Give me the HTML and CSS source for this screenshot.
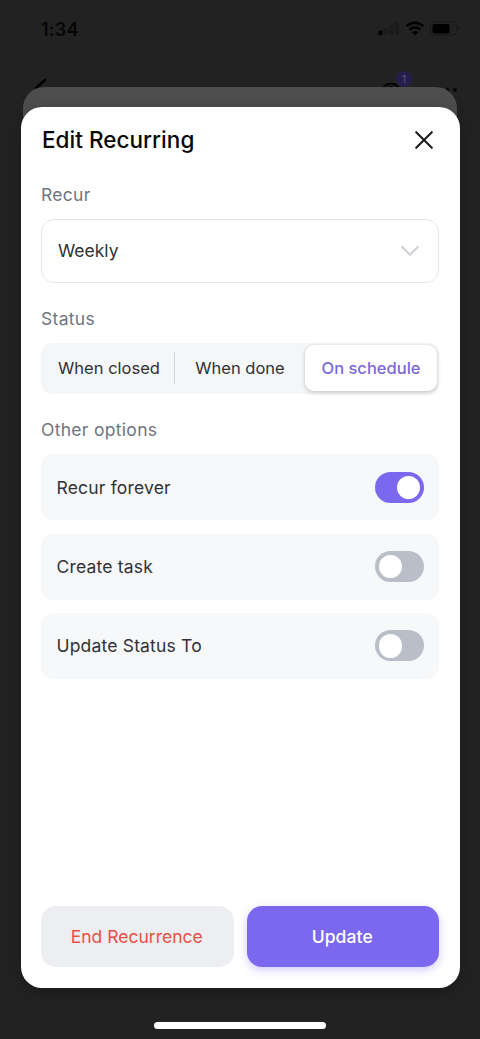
FILE: index.html
```html
<!DOCTYPE html>
<html lang="en">
<head>
<meta charset="utf-8">
<title>Edit Recurring</title>
<link rel="stylesheet" href="styles.css">
</head>
<body>
<div class="screen">
  <header class="status-bar">
    <span class="clock">1:34</span>
    <svg class="status-icons" width="82" height="18" viewBox="0 0 82 18">
      <rect x="0.5" y="10.5" width="4" height="4.5" rx="1" fill="#000"/>
      <g fill="#1b1b1b"><rect x="6" y="8" width="4" height="7" rx="1"/><rect x="11.500" y="5" width="4" height="10" rx="1"/><rect x="17" y="2" width="4" height="13" rx="1"/></g>
      <g fill="none" stroke="#000" stroke-width="2.400"><path d="M28.600 6.200Q37 -.8 45.400 6.200"/><path d="M31.600 9.600Q37 5.400 42.400 9.600"/></g>
      <path d="M33.800 12.200Q37 9.600 40.200 12.200L37 15.200Z" fill="#000"/>
      <rect x="52.500" y="2" width="26" height="13" rx="3.500" fill="none" stroke="#171717" stroke-width="1"/>
      <rect x="54.500" y="4" width="17" height="9.500" rx="2" fill="#000"/>
      <path d="M80 6v5q2-1 2-2.500T80 6Z" fill="#151515"/>
    </svg>
  </header>
  <div class="nav-bar">
    <svg class="back" width="14" height="16" viewBox="0 0 14 16"><path d="M11 2 2 10l8 8" fill="none" stroke="#000" stroke-width="2.400" stroke-linecap="round"/></svg>
    <div class="watchers">
      <svg width="22" height="14" viewBox="0 0 22 14"><path d="M1 7Q11-6 21 7M6 8a5 4 0 0 1 10 0" fill="none" stroke="#000" stroke-width="1.800"/></svg>
      <span class="badge">1</span>
    </div>
    <svg class="more" width="20" height="4" viewBox="0 0 20 4"><circle cx="2" cy="2" r="1.800"/><circle cx="9.500" cy="2" r="1.800"/><circle cx="17" cy="2" r="1.800"/></svg>
  </div>
  <div class="sheet"></div>
  <main class="modal">
    <div class="modal-head">
      <h1 class="title">Edit Recurring</h1>
      <svg class="close" width="20" height="20" viewBox="0 0 20 20"><path d="M2.200 2.200 17.800 17.800M17.800 2.200 2.200 17.800" fill="none" stroke="#1d1d1d" stroke-width="2.100" stroke-linecap="round"/></svg>
    </div>
    <h2 class="label label-recur">Recur</h2>
    <div class="select"><span class="weekly">Weekly</span>
      <svg width="20" height="12" viewBox="0 0 20 12"><path d="M2.200 2 10 9.800 17.800 2" fill="none" stroke="#cfd2d6" stroke-width="2.200" stroke-linecap="round" stroke-linejoin="round"/></svg>
    </div>
    <h2 class="label label-status">Status</h2>
    <div class="segments">
      <span class="segment divided">When closed</span>
      <span class="segment middle">When done</span>
      <span class="segment selected">On schedule</span>
    </div>
    <h2 class="label label-options">Other options</h2>
    <div class="options">
      <div class="option"><span>Recur forever</span><span class="toggle on"><i class="knob"></i></span></div>
      <div class="option"><span>Create task</span><span class="toggle"><i class="knob"></i></span></div>
      <div class="option"><span>Update Status To</span><span class="toggle"><i class="knob"></i></span></div>
    </div>
    <div class="actions">
      <button class="button end">End Recurrence</button>
      <button class="button update">Update</button>
    </div>
  </main>
  <div class="home-indicator"></div>
</div>
</body>
</html>
```
FILE: styles.css
```css
* { box-sizing: border-box; }
body { margin: 0; background: #222; font-family: Inter, "Liberation Sans", sans-serif; }
.screen { position: relative; width: 480px; height: 1039px; overflow: hidden; background: #222; display: flex; flex-direction: column; align-items: center; }
.status-bar { width: 100%; height: 70px; padding: 20px 20px 0 41px; display: flex; justify-content: space-between; align-items: flex-start; }
.clock { font-size: 18px; line-height: 19px; font-weight: 600; color: #060606; letter-spacing: 0.2px; }
.status-icons { display: block; }
.nav-bar { width: 100%; height: 37px; padding: 8px 22px 0 34px; display: flex; align-items: flex-start; }
.back { margin-right: auto; }
.watchers { position: relative; margin-right: 36px; padding-top: 3px; height: 20px; }
.badge { position: absolute; left: 16px; top: -7px; width: 16px; height: 16px; border-radius: 50%; background: #251e4c; color: #57547a; font-size: 11px; line-height: 16px; text-align: center; }
.more { margin-top: 9.500px; }
.sheet { position: absolute; left: 23px; top: 87px; width: 434px; height: 60px; border-radius: 21px 21px 0 0; background: #4d4d4d; }
.modal { position: relative; width: 439px; height: 880.500px; margin-top: 0.400px; padding: 0 20.500px; border-radius: 21px; background: #fff; display: flex; flex-direction: column; box-shadow: 0 4px 14px rgba(0,0,0,.25); }
.modal-head { height: 65px; display: flex; align-items: center; justify-content: space-between; padding: 0 5.500px 0 1px; }
.title { margin: 0; font-size: 22.500px; line-height: 28px; font-weight: 500; color: #080808; letter-spacing: .03px; }
.label { margin: 0; font-size: 17.500px; line-height: 24px; font-weight: 400; color: #70757f; letter-spacing: .3px; }
.label-recur { margin-top: 11px; }
.select { margin-top: 11.500px; height: 64px; border: 1px solid #e5e6e8; border-radius: 13px; padding: 0 18px 0 16px; display: flex; align-items: center; justify-content: space-between; font-size: 17.500px; color: #303236; }
.label-status { margin-top: 24px; }
.segments { margin-top: 12px; height: 51px; border-radius: 11px; background: #f5f6f8; display: grid; grid-template-columns: 134px 130px 132px; align-items: center; font-size: 16.500px; color: #303236; }
.segment { height: 32px; display: flex; align-items: center; justify-content: center; }
.divided { padding-left: 3px; border-right: 1px solid #d4d5d8; }
.selected { height: 46px; border-radius: 9px; background: #fff; color: #7c68d8; font-weight: 500; box-shadow: 0 2px 5px rgba(0,0,0,.16), 0 0 2px rgba(0,0,0,.1); }
.label-options { margin-top: 24px; }
.options { margin-top: 12.500px; display: grid; gap: 13.300px; }
.option { height: 66px; border-radius: 12px; background: #f7f8fa; padding: 0 15px 0 15.500px; display: flex; align-items: center; justify-content: space-between; font-size: 17.500px; color: #303236; letter-spacing: .18px; }
.toggle { width: 49px; height: 31px; border-radius: 16px; padding: 3.700px; background: #b9bec8; display: flex; }
.toggle.on { background: #7b68ee; justify-content: flex-end; }
.knob { width: 23.600px; height: 23.600px; border-radius: 50%; background: #fff; }
.actions { margin-top: auto; margin-bottom: 20.500px; display: grid; grid-template-columns: 1fr 1fr; gap: 13px; }
.button { height: 61px; padding: 0 1px 1px 0; border: 0; border-radius: 15px; font: 400 17.500px Inter, "Liberation Sans", sans-serif; }
.end { background: #eceef2; color: #e95045; }
.update { background: #7b68ee; color: #fff; font-weight: 500; letter-spacing: .1px; box-shadow: 0 3px 8px rgba(123,104,238,.35); }
.home-indicator { margin-top: 34px; width: 172px; height: 7px; border-radius: 4px; background: #fff; }
```
